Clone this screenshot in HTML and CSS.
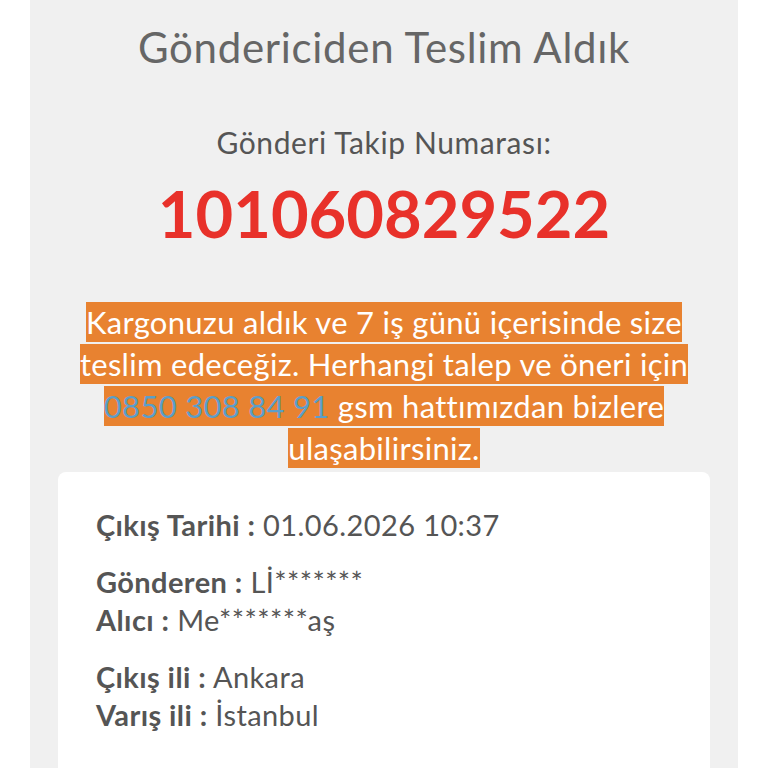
FILE: index.html
```html
<!DOCTYPE html>
<html lang="tr">
<head>
<meta charset="utf-8">
<link rel="stylesheet" href="styles.css">
</head>
<body>
<div class="panel">
  <h1 class="title">Göndericiden Teslim Aldık</h1>
  <div class="sub">Gönderi Takip Numarası:</div>
  <div class="code">101060829522</div>
  <p class="notice"><span class="hl">Kargonuzu aldık ve 7 iş günü içerisinde size<br>teslim edeceğiz. Herhangi talep ve öneri için<br><a class="phone">0850 308 84 91</a> gsm hattımızdan bizlere<br>ulaşabilirsiniz.</span></p>
  <div class="card">
    <div class="group">
      <div class="row"><b>Çıkış Tarihi :</b> 01.06.2026 10:37</div>
    </div>
    <div class="group">
      <div class="row"><b>Gönderen :</b> Lİ*******</div>
      <div class="row"><b>Alıcı :</b> Me*******aş</div>
    </div>
    <div class="group">
      <div class="row"><b>Çıkış ili :</b> Ankara</div>
      <div class="row"><b>Varış ili :</b> İstanbul</div>
    </div>
  </div>
</div>
</body>
</html>
```

FILE: styles.css
```css
html, body {
  margin: 0;
  padding: 0;
  background: #ffffff;
  font-family: "Lato", "Noto Sans", sans-serif;
}
.panel {
  margin: 0 30px;
  background: #f0f0f0;
  min-height: 768px;
  padding-top: 22px;
  text-align: center;
}
.title {
  margin: 0;
  font-size: 42px;
  font-weight: 400;
  color: #666666;
  line-height: 50px;
  letter-spacing: 0.7px;
}
.sub {
  margin-top: 52px;
  font-size: 30px;
  color: #555555;
  line-height: 36px;
  letter-spacing: 0.6px;
}
.code {
  margin-top: 18px;
  font-size: 65px;
  font-weight: 700;
  color: #e8312a;
  line-height: 70px;
}
.notice {
  margin: 53px -20px 0;
  font-size: 31px;
  line-height: 42px;
  color: #ffffff;
  letter-spacing: 0.3px;
}
.hl {
  background: #e88230;
  padding: 1px 0;
}
.phone {
  color: #5b9ec9;
}
.card {
  margin: 3px 28px 0;
  background: #ffffff;
  border-radius: 8px;
  padding: 34px 38px 30px;
  text-align: left;
  min-height: 300px;
  box-sizing: border-box;
}
.group {
  margin-bottom: 19px;
}
.row {
  font-size: 29px;
  line-height: 38px;
  color: #555555;
  letter-spacing: 0.4px;
}
.row b {
  font-weight: 700;
}
```
